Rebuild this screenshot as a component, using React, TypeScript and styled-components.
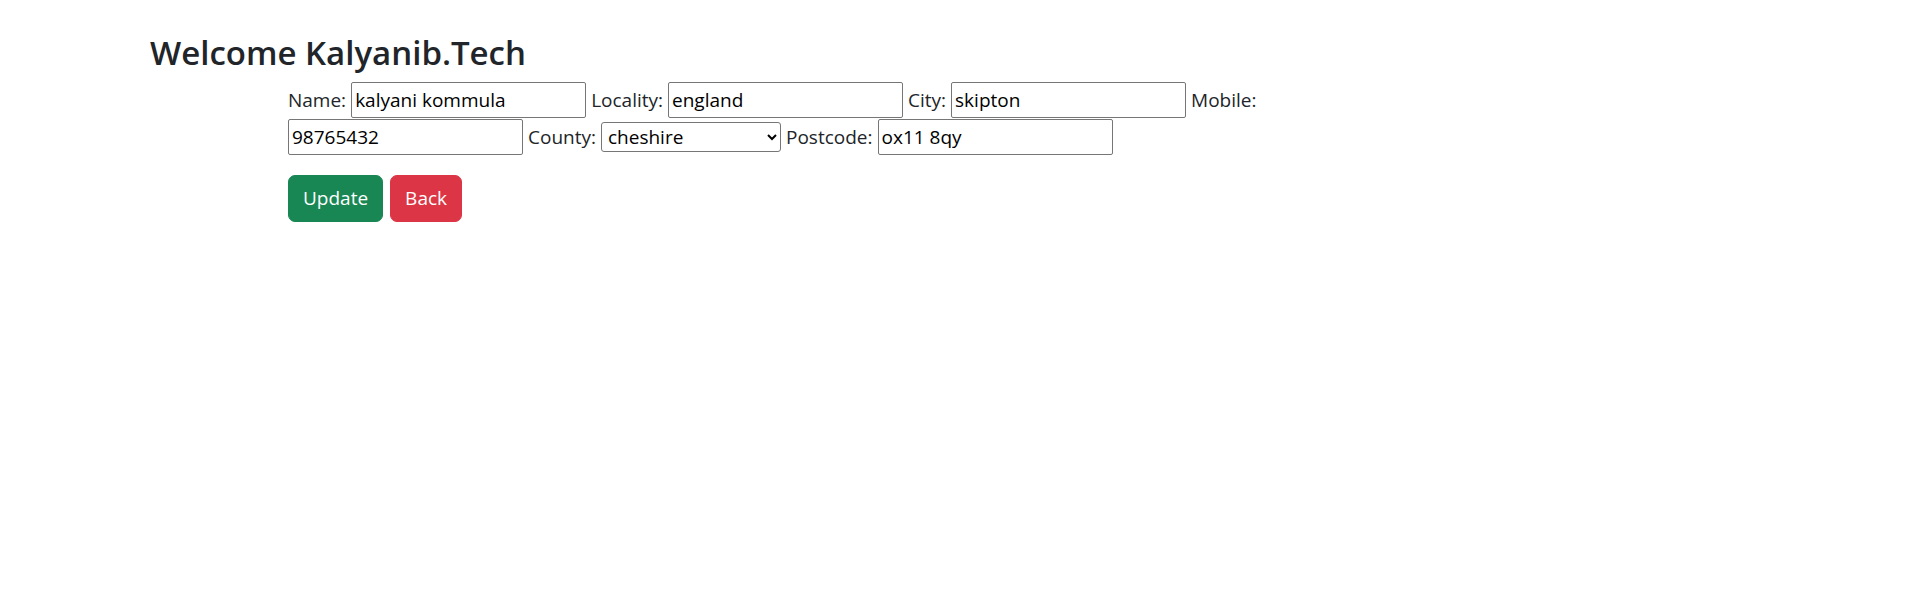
import styled, { createGlobalStyle } from "styled-components";

const GlobalStyle = createGlobalStyle`
  html, body {
    margin: 0;
    padding: 0;
    background: #ffffff;
  }
  body {
    font-family: "Open Sans", "Liberation Sans", sans-serif;
    font-size: 20px;
    line-height: 1.5;
    color: #212529;
  }
  * {
    box-sizing: border-box;
  }
`

const Page = styled.div`
  display: flex;
  flex-direction: column;
  align-items: flex-start;
  padding: 33px 0 0 150px;
`

const Heading = styled.h2`
  margin: 0 0 9px 0;
  font-size: 33px;
  font-weight: 600;
  line-height: 1.2;
  color: #212529;
`

const Form = styled.form`
  display: flex;
  flex-direction: column;
  margin-left: 138px;
  width: 1060px;
`

const FieldRow = styled.div`
  display: flex;
  flex-wrap: wrap;
  align-items: center;
  column-gap: 5px;
  row-gap: 1px;
`

const Label = styled.label`
  font-size: 19px;
  line-height: 30px;
  color: #212529;
`

const TextInput = styled.input`
  width: 235px;
  height: 36px;
  padding: 1px 3px;
  border: 1px solid #767676;
  border-radius: 2px;
  background: #ffffff;
  font-family: inherit;
  font-size: 19px;
  color: #000000;
  outline: none;
`

const Select = styled.select`
  width: 180px;
  height: 30px;
  padding: 0 2px;
  border: 1px solid #767676;
  border-radius: 3px;
  background: #ffffff;
  font-family: inherit;
  font-size: 19px;
  color: #000000;
`

const ButtonRow = styled.div`
  display: flex;
  flex-direction: row;
  gap: 7px;
  margin-top: 20px;
`

const Button = styled.button<{ $variant: "success" | "danger" }>`
  height: 47px;
  padding: 0 14px;
  border: 1px solid ${(p) => (p.$variant === "success" ? "#198754" : "#dc3545")};
  border-radius: 7px;
  background-color: ${(p) => (p.$variant === "success" ? "#198754" : "#dc3545")};
  color: #ffffff;
  font-family: inherit;
  font-size: 19px;
  line-height: 30px;
  cursor: pointer;
`

const counties = ["cheshire", "cornwall", "devon", "kent", "surrey"];

export default function App() {
  return (
    <>
      <GlobalStyle />
      <Page>
        <Heading>Welcome Kalyanib.Tech</Heading>
        <Form onSubmit={(e) => e.preventDefault()}>
          <FieldRow>
            <Label htmlFor="name">Name:</Label>
            <TextInput id="name" defaultValue="kalyani kommula" />
            <Label htmlFor="locality">Locality:</Label>
            <TextInput id="locality" defaultValue="england" />
            <Label htmlFor="city">City:</Label>
            <TextInput id="city" defaultValue="skipton" />
            <Label htmlFor="mobile">Mobile:</Label>
            <TextInput id="mobile" defaultValue="98765432" />
            <Label htmlFor="county">County:</Label>
            <Select id="county" defaultValue="cheshire">
              {counties.map((c) => (
                <option key={c} value={c}>{c}</option>
              ))}
            </Select>
            <Label htmlFor="postcode">Postcode:</Label>
            <TextInput id="postcode" defaultValue="ox11 8qy" />
          </FieldRow>
          <ButtonRow>
            <Button type="submit" $variant="success">Update</Button>
            <Button type="button" $variant="danger">Back</Button>
          </ButtonRow>
        </Form>
      </Page>
    </>
  )
}
